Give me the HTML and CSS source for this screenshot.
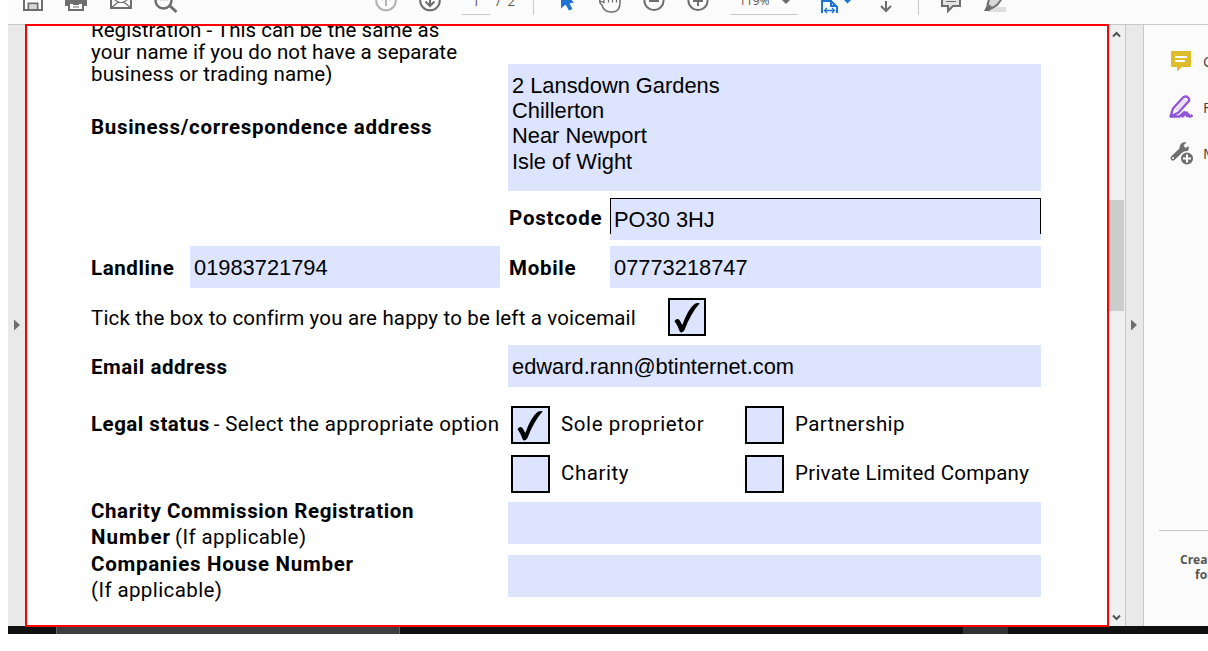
FILE: index.html
```
<!DOCTYPE html>
<html lang="en">
<head>
<meta charset="utf-8">
<title>Registration form</title>
<link rel="stylesheet" href="styles.css">
</head>
<body>
<div class="window">
  <header class="toolbar">
    <svg class="icon save" width="20" height="24" viewBox="23 0 20 24"><path d="M24 0V10H42V0M28.500 10V3.500H37.500V10" fill="none" stroke="#6e6e6e" stroke-width="2"/><path d="M29.500 4.500h7V9h-7z" fill="#d8d8d8"/></svg>
    <svg class="icon print" width="22" height="24" viewBox="65 0 22 24"><path d="M65 0H87V6H65z" fill="#6e6e6e"/><path d="M69 3H83V10H69z" fill="#fff" stroke="#6e6e6e" stroke-width="2"/><path d="M73 4.500h6M73 7h6" stroke="#6e6e6e"/></svg>
    <svg class="icon mail" width="22" height="24" viewBox="110 0 22 24"><path d="M111 0V8H131V0" fill="none" stroke="#6e6e6e" stroke-width="2"/><path d="M111.500 7.500 119 1.500M130.500 7.500 123 1.500M115 0Q121 5 127 0" fill="none" stroke="#6e6e6e" stroke-width="1.200"/></svg>
    <svg class="icon search" width="24" height="24" viewBox="154 0 24 24"><circle cx="163.500" cy="0.500" r="8" fill="none" stroke="#6e6e6e" stroke-width="2.400"/><path d="M160 0h1.500M163 0h1.500M166 0h1.500" stroke="#aaa"/><path d="M169.500 5.500 176.500 12" stroke="#6e6e6e" stroke-width="3"/></svg>
    <svg class="icon page-up" width="22" height="24" viewBox="375 0 22 24"><g stroke="#b3b3b3" stroke-width="2" fill="none"><circle cx="386" cy="0.500" r="9.800"/><path d="M386 0V6M382 0 386-4 390 0"/></g></svg>
    <svg class="icon page-down" width="22" height="24" viewBox="419 0 22 24"><g stroke="#6e6e6e" stroke-width="2" fill="none"><circle cx="430" cy="0.500" r="9.800"/><path d="M430 0V5.500M425.500 1.500 430 6 434.500 1.500"/></g></svg>
    <span class="page-number">1</span>
    <span class="page-total">/&nbsp; 2</span>
    <span class="divider first"></span>
    <svg class="icon cursor" width="14" height="24" viewBox="560 0 14 24"><path d="M561 0V8.500L565.500 4.500 569 10.500 572.500 9 569.500 3.500 574 2.500 571.500 0z" fill="#1d73cf"/></svg>
    <svg class="icon hand" width="24" height="24" viewBox="598 0 24 24"><path d="M600 0Q599 3 602 5 604 12 611 12H613Q620 11 620 3V0" fill="#fff" stroke="#6e6e6e" stroke-width="1.500"/><path d="M600 1 604 2.500V0M608.500 0V2.500M612.500 0V2.500M616.500 0V2.500" fill="none" stroke="#6e6e6e" stroke-width="1.300"/></svg>
    <svg class="icon minus" width="22" height="24" viewBox="643 0 22 24"><g stroke="#6e6e6e" stroke-width="2" fill="none"><circle cx="654" cy="0.500" r="9.600"/><path d="M649 1H659"/></g></svg>
    <svg class="icon plus" width="22" height="24" viewBox="687 0 22 24"><g stroke="#6e6e6e" stroke-width="2" fill="none"><circle cx="698" cy="0.500" r="9.600"/><path d="M693 1H703M698 0V6"/></g></svg>
    <div class="zoom-level"><span>119%</span><svg width="8" height="5" viewBox="0 0 8 5"><path d="M0 0H8L4 4z" fill="#6e6e6e"/></svg></div>
    <svg class="icon fit" width="30" height="24" viewBox="821 0 30 24"><path d="M822 13V0M822 1H831L837 7V13M831 0V6H837" fill="none" stroke="#1d73cf" stroke-width="2"/><path d="M825 10.500H834M827 8 824.500 10.500 827 13M832 8 834.500 10.500 832 13" fill="none" stroke="#1d73cf" stroke-width="1.300"/><path d="M844 0H851L847.500 3.500z" fill="#1d73cf"/></svg>
    <svg class="icon scroll-down" width="12" height="24" viewBox="880 0 12 24"><path d="M886 1V11M881 6 886 11 891 6" fill="none" stroke="#6e6e6e" stroke-width="2"/></svg>
    <span class="divider second"></span>
    <svg class="icon comment" width="20" height="24" viewBox="941 0 20 24"><path d="M942 0V6H948V11L953 6H960V0" fill="#e4e4e4" stroke="#6e6e6e" stroke-width="2"/><path d="M946 1.500H956" stroke="#6e6e6e"/></svg>
    <svg class="icon highlighter" width="23" height="24" viewBox="983 0 23 24"><path d="M992 7H1006V12H987z" fill="#dedede"/><path d="M989 0 987.500 4.500 992 8 997 5 1001 0" fill="#d8d8d8" stroke="#6e6e6e" stroke-width="2"/><path d="M987 5 992 9 989 11H984z" fill="#6e6e6e"/></svg>
  </header>

  <main class="workspace">
    <div class="nav-strip"><svg class="arrow" width="6" height="12" viewBox="0 0 6 12"><path d="M0 0.500 6 6 0 11.500z" fill="#6e6e6e"/></svg></div>

    <section class="page">
      <div class="row address-row">
        <div class="left">
          <p class="note"><span class="n1">Registration - This can be the same as</span><br><span class="n2">your name if you do not have a separate</span><br><span class="n3">business or trading name)</span></p>
          <p class="label business">Business/correspondence address</p>
        </div>
        <div class="field address">2 Lansdown Gardens<br>Chillerton<br>Near Newport<br>Isle of Wight</div>
      </div>
      <div class="row postcode-row">
        <span class="label postcode-label">Postcode</span>
        <div class="field short postcode">PO30 3HJ</div>
      </div>
      <div class="row phone-row">
        <span class="label landline-label">Landline</span>
        <div class="field landline">01983721794</div>
        <span class="label mobile-label">Mobile</span>
        <div class="field short">07773218747</div>
      </div>
      <div class="row tick-row">
        <span class="text voicemail">Tick the box to confirm you are happy to be left a voicemail</span>
        <span class="check"><svg width="34" height="34" viewBox="0 0 34 34"><path d="M4.500 21Q7 17.500 9.500 20L12.300 25Q18 9 24.500 4 27 2.500 29.800 3.300 21 13 14.500 30 12.500 33.500 10 32 8 26 4.500 21z"/></svg></span>
      </div>
      <div class="row email-row">
        <span class="label email-label">Email address</span>
        <div class="field wide">edward.rann@btinternet.com</div>
      </div>
      <div class="row legal-row">
        <p class="legal"><span class="label legal-label">Legal status</span> <span class="text legal-text">- Select the appropriate option</span></p>
        <div class="options">
          <span class="check box"><svg width="34" height="34" viewBox="0 0 34 34"><path d="M4.500 21Q7 17.500 9.500 20L12.300 25Q18 9 24.500 4 27 2.500 29.800 3.300 21 13 14.500 30 12.500 33.500 10 32 8 26 4.500 21z"/></svg></span><span class="text sole">Sole proprietor</span>
          <span class="check box"></span><span class="text partner">Partnership</span>
          <span class="check box"></span><span class="text charity">Charity</span>
          <span class="check box"></span><span class="text limited">Private Limited Company</span>
        </div>
      </div>
      <div class="row commission-row">
        <p class="stack"><span class="label commission">Charity Commission Registration</span><br><span class="label number">Number</span> <span class="text applicable">(If applicable)</span></p>
        <div class="field wide"></div>
      </div>
      <div class="row companies-row">
        <p class="stack"><span class="label companies">Companies House Number</span><br><span class="text applicable">(If applicable)</span></p>
        <div class="field wide"></div>
      </div>
    </section>

    <div class="scrollbar">
      <svg class="up" width="9" height="7" viewBox="0 0 9 7"><path d="M1 5.500 4.500 2 8 5.500" fill="none" stroke="#505050" stroke-width="2"/></svg>
      <div class="thumb"></div>
      <svg class="down" width="9" height="7" viewBox="0 0 9 7"><path d="M1 1.500 4.500 5 8 1.500" fill="none" stroke="#505050" stroke-width="2"/></svg>
    </div>
    <div class="tools-strip"><svg class="arrow" width="6" height="12" viewBox="0 0 6 12"><path d="M0 0.500 6 6 0 11.500z" fill="#6e6e6e"/></svg></div>

    <aside class="tools">
      <div class="tool"><svg width="24" height="24" viewBox="0 0 24 24"><path d="M3 2H21Q22 2 22 3V17Q22 18 21 18H13L8 22.500V18H3Q2 18 2 17V3Q2 2 3 2z" fill="#dfbc2b"/><path d="M6 8H18M6 12H16" stroke="#fff" stroke-width="1.800"/></svg><span>Comment</span></div>
      <div class="tool"><svg width="24" height="24" viewBox="0 0 24 24"><path d="M5.500 15 15 4 18 6 9 16z" fill="#e9dcf7"/><path d="M1.500 21.500 4 13.500 14 2.500Q17 .500 19 2.500T19.500 6.500L9.500 17.500 1.500 21.500H10.500L15.500 17 13.500 21.500 18 17.500V21Q20 18 20 20.500T23.500 20" fill="none" stroke="#9256d9" stroke-width="2.400" stroke-linejoin="round"/></svg><span>Fill &amp; Sign</span></div>
      <div class="tool"><svg width="24" height="24" viewBox="0 0 24 24"><path d="M4 17 13 8.500" stroke="#6e6e6e" stroke-width="5" stroke-linecap="round"/><path d="M17.500 1.500 14.500 4.500 16.500 7 19.500 5Q21 10 16 12 10 12 10.500 6 12 0 17.500 1.500z" fill="#6e6e6e"/><circle cx="4" cy="17" r="1" fill="#fff"/><circle cx="18" cy="17.500" r="6.800" fill="#6e6e6e" stroke="#fbfbfb" stroke-width="1.500"/><path d="M14 17.500H22M18 13.500V21.500" stroke="#fff" stroke-width="2"/></svg><span>More Tools</span></div>
      <div class="promo"><span>Create, edit and sign PDF</span><span class="second-line">forms &amp; agreements</span></div>
    </aside>
  </main>
  <footer class="taskbar"><span class="task active"></span><span class="task tray"></span></footer>
</div>
</body>
</html>
```
FILE: styles.css
```
* { box-sizing: border-box; }
body { margin: 0; background: #fff; overflow: hidden; font-family: Roboto, sans-serif; color: #000; }
p { margin: 0; }
svg { display: block; flex: none; }
.window { width: 1200px; height: 634px; margin-left: 8px; overflow: hidden; }
.toolbar { height: 24px; display: flex; background: #fbfbfb; font: 13px/14px "Open Sans", sans-serif; color: #555; overflow: hidden; }
.toolbar > * { flex: none; }
.save { margin-left: 15px; }
.print { margin-left: 22px; }
.mail { margin-left: 23px; }
.search { margin-left: 22px; }
.page-up { margin-left: 197px; }
.page-down { margin-left: 22px; }
.page-number { width: 28px; height: 15px; margin-left: 21px; border-bottom: 1px solid #c8c8c8; text-align: center; line-height: 2px; }
.page-total { width: 20px; margin-left: 6px; line-height: 2px; white-space: nowrap; }
.divider { width: 1px; height: 15px; background: #c8c8c8; }
.divider.first { margin-left: 17px; }
.cursor { margin-left: 26px; }
.hand { margin-left: 24px; }
.minus { margin-left: 21px; }
.plus { margin-left: 22px; }
.zoom-level { width: 68px; height: 15px; margin-left: 21px; padding: 0 8px 0 9px; display: flex; justify-content: space-between; border-bottom: 1px solid #c8c8c8; line-height: 2px; font-size: 12px; }
.fit { margin-left: 23px; }
.scroll-down { margin-left: 29px; }
.divider.second { margin-left: 26px; }
.comment { margin-left: 22px; }
.highlighter { margin-left: 22px; }

.workspace { height: 602px; display: grid; grid-template-columns: 17px 1084px 16px 19px 64px; grid-template-rows: 602px; }
.nav-strip, .tools-strip, .scrollbar, .tools { border-top: 1px solid #c8c8c8; }
.nav-strip { background: #e9e9e9; padding: 294px 0 0 6px; }
.tools-strip { background: #e9e9e9; border-left: 1px solid #c8c8c8; border-right: 1px solid #c8c8c8; padding: 294px 0 0 5px; }
.page { position: relative; height: 603px; border: 2px solid #f00; background: #fff; padding-left: 64px; overflow: hidden; }
.row { display: flex; }
.row > * { flex: none; }
.label { font-weight: 700; font-size: 20.500px; white-space: nowrap; }
.text, .note { font-size: 20.500px; white-space: nowrap; }
.field { background: #dde4ff; padding-left: 4px; font: 21.850px/43px "Liberation Sans", Arial, sans-serif; height: 42px; white-space: nowrap; }
.short { width: 431px; }
.wide { width: 533px; }

.address-row { height: 165px; }
.left { width: 417px; }
.note { line-height: 22px; margin-top: -7px; }
.n1 { letter-spacing: .05px; }
.n2 { letter-spacing: .09px; }
.n3 { letter-spacing: .15px; }
.business { margin-top: 30px; line-height: 24px; letter-spacing: .7px; }
.address { width: 533px; height: 127px; margin-top: 38px; padding-top: 9px; line-height: 25.200px; }
.postcode-row { margin-top: 7px; padding-left: 418px; }
.postcode-label { width: 101px; line-height: 40px; letter-spacing: .8px; }
.postcode { position: relative; }
.postcode::before { content: ""; position: absolute; left: 0; top: 0; width: 429px; height: 35px; border: 1px solid #000; border-bottom: 0; }
.phone-row { margin-top: 6px; line-height: 44px; height: 42px; }
.landline-label { width: 99px; letter-spacing: .6px; }
.landline { width: 310px; }
.mobile-label { width: 101px; margin-left: 9px; letter-spacing: .7px; }
.tick-row { margin-top: 10px; line-height: 40px; height: 38px; }
.voicemail { width: 577px; letter-spacing: .16px; }
.check { width: 38px; height: 38px; border: 2px solid #000; background: #dde4ff; }
.email-row { margin-top: 9px; line-height: 44px; height: 42px; }
.email-label { width: 417px; letter-spacing: .53px; }
.legal-row { margin-top: 19px; }
.legal { width: 420px; line-height: 37px; white-space: nowrap; font-size: 16px; }
.legal-label { letter-spacing: .5px; }
.legal-text { letter-spacing: .38px; }
.options { display: grid; grid-template-columns: 50px 184px 50px 250px; row-gap: 11px; line-height: 36px; }
.sole { letter-spacing: .6px; }
.partner { letter-spacing: .38px; }
.charity { letter-spacing: .57px; }
.limited { letter-spacing: .25px; }
.box { width: 39px; }
.commission-row { margin-top: 9px; }
.companies-row { margin-top: 11px; }
.stack { width: 417px; height: 42px; line-height: 25px; margin-top: -3.500px; white-space: nowrap; font-size: 16px; }
.commission { letter-spacing: .61px; }
.number { letter-spacing: 1.050px; }
.applicable { letter-spacing: .4px; }
.companies { letter-spacing: .72px; }
.commission-row, .companies-row { height: 42px; }

.scrollbar { background: #f0f0f0; display: flex; flex-direction: column; }
.up { margin: 6px 0 0 3px; }
.thumb { width: 15px; height: 111px; margin-top: 162px; background: #cdcdcd; }
.down { margin: 303px 0 0 3px; }
.tools { background: #fbfbfb; overflow: hidden; padding-top: 24px; }
.tool { display: flex; align-items: center; height: 24px; margin: 0 0 22px 25px; white-space: nowrap; font: 15px/24px "Open Sans", sans-serif; color: #444; }
.tool span { margin-left: 10px; }
.promo { margin: 365px 0 0 15px; border-top: 1px solid #c8c8c8; padding: 21px 0 0 21px; font: 700 12px/15px "Open Sans", sans-serif; color: #555; white-space: nowrap; }
.promo span { display: block; }
.promo .second-line { margin-left: 15px; }
.taskbar { height: 8px; background: #101010; display: flex; }
.task.active { width: 344px; margin-left: 48px; background: #3f3f3f; border: solid #666; border-width: 0 1px; }
.task.tray { width: 45px; margin-left: 563px; background: #333; }
```
